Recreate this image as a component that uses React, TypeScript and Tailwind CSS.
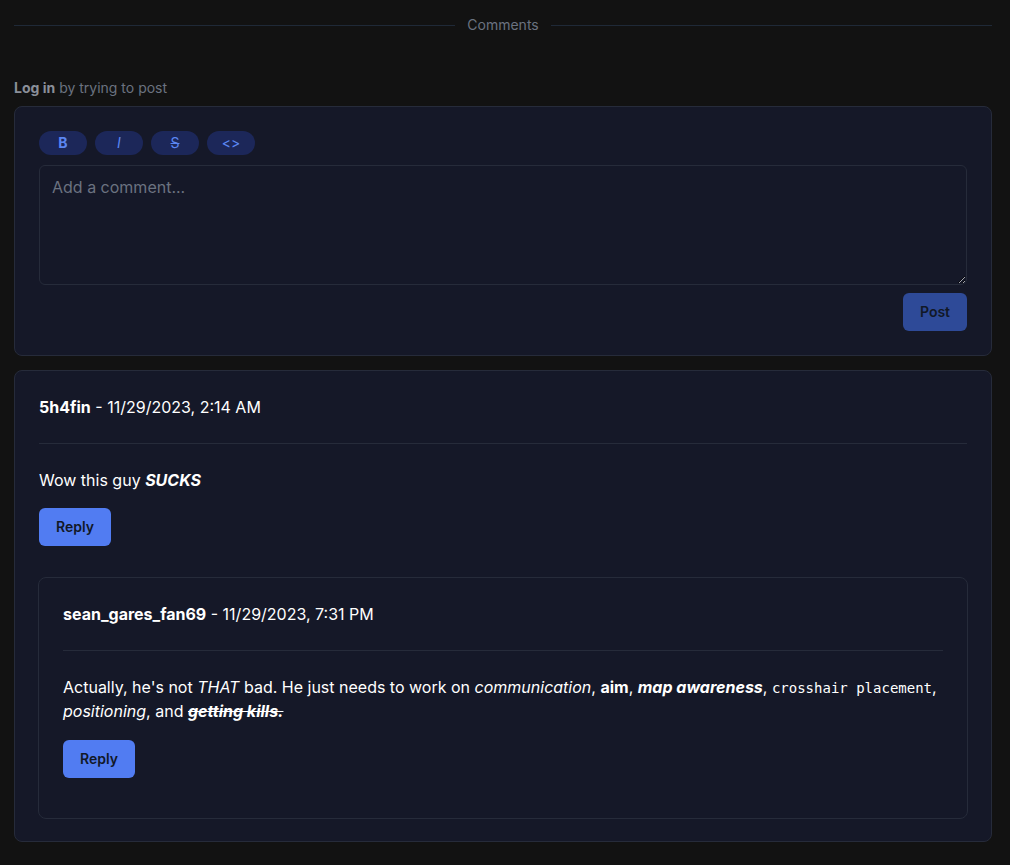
export default function App() {
  return (
    <div className="min-h-[865px] bg-[#121212] pl-[14px] pr-[18px] pt-[15px] pb-6 font-['Inter',sans-serif] text-white">
      <div className="flex items-center gap-3">
        <div className="h-px flex-1 bg-[#1f2937]" />
        <span className="text-sm leading-5 text-[#6b7280]">Comments</span>
        <div className="h-px flex-1 bg-[#1f2937]" />
      </div>

      <p className="mt-[43px] text-sm leading-5 text-[#6b7280]">
        <span className="font-bold text-[#8a8f99]">Log in</span> by trying to post
      </p>

      <div className="mt-2 rounded-lg border border-[#262b3a] bg-[#151828] p-6">
        <div className="flex gap-2">
          <button className="h-6 w-12 rounded-full bg-[#1c2759] text-sm font-bold text-[#5b86f2]">B</button>
          <button className="h-6 w-12 rounded-full bg-[#1c2759] text-sm italic text-[#5b86f2]">I</button>
          <button className="h-6 w-12 rounded-full bg-[#1c2759] text-sm line-through text-[#5b86f2]">S</button>
          <button className="h-6 w-12 rounded-full bg-[#1c2759] text-sm text-[#5b86f2]">&lt;&gt;</button>
        </div>
        <textarea
          placeholder="Add a comment..."
          className="mt-[10px] block h-[120px] w-full rounded-md border border-[#262b3a] bg-[#151828] px-3 py-[9px] text-base text-white placeholder:text-[#6b7280] outline-none"
        />
        <div className="mt-2 flex justify-end">
          <button className="h-[38px] w-16 rounded-md bg-[#2e4a98] text-sm font-semibold text-[#111827]">Post</button>
        </div>
      </div>

      <div className="mt-[14px] rounded-lg border border-[#262b3a] bg-[#151828] px-6 pt-6 pb-[22px]">
        <div className="leading-6">
          <span className="font-bold">5h4fin</span> - 11/29/2023, 2:14 AM
        </div>
        <div className="my-6 h-px bg-[#262b3a]" />
        <p className="leading-6">
          Wow this guy <strong className="italic">SUCKS</strong>
        </p>
        <button className="mt-4 h-[38px] w-[72px] rounded-md bg-[#517cf2] text-sm font-semibold text-[#111827]">Reply</button>

        <div className="-mx-px mt-[31px] rounded-lg border border-[#262b3a] bg-[#151828] px-6 pt-6 pb-10">
          <div className="leading-6">
            <span className="font-bold">sean_gares_fan69</span> - 11/29/2023, 7:31 PM
          </div>
          <div className="my-6 h-px bg-[#262b3a]" />
          <p className="leading-6">
            Actually, he's not <em>THAT</em> bad. He just needs to work on <em>communication</em>, <strong>aim</strong>,{" "}
            <strong className="italic">map awareness</strong>,{" "}
            <code className="font-['DejaVu_Sans_Mono',monospace] text-sm">crosshair placement</code>,{" "}
            <em>positioning</em>, and <strong className="italic line-through">getting kills.</strong>
          </p>
          <button className="mt-[17px] h-[38px] w-[72px] rounded-md bg-[#517cf2] text-sm font-semibold text-[#111827]">Reply</button>
        </div>
      </div>
    </div>
  );
}
